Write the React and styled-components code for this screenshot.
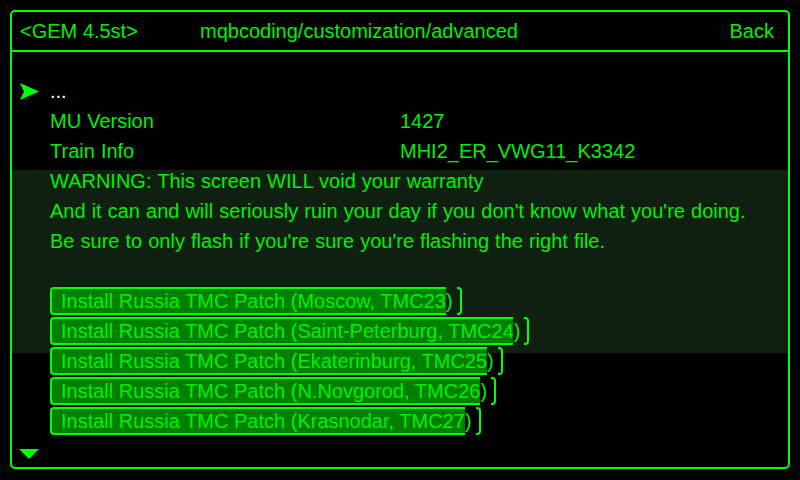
import React from "react";
import styled, { createGlobalStyle } from "styled-components";

const GREEN = "#00ff00";
const TEXT = "#00f000";

const Global = createGlobalStyle`
  html, body {
    margin: 0;
    padding: 0;
    background: #000;
  }
  body {
    width: 800px;
    height: 480px;
    overflow: hidden;
    font-family: "Liberation Sans", Arial, sans-serif;
  }
`;

const Screen = styled.div`
  width: 800px;
  height: 480px;
  padding: 10px 10px 11px 10px;
  box-sizing: border-box;
  background: #000;
`;

const Frame = styled.div`
  height: 100%;
  box-sizing: border-box;
  border: 2px solid ${GREEN};
  border-radius: 5px;
  display: flex;
  flex-direction: column;
`;

const Header = styled.div`
  height: 40px;
  box-sizing: border-box;
  border-bottom: 2px solid ${GREEN};
  display: flex;
  align-items: center;
  padding: 1px 14px 0 8px;
  color: ${TEXT};
  font-size: 20px;
`;

const Version = styled.div`
  width: 180px;
`;

const Path = styled.div`
  flex: 1;
`;

const Content = styled.div`
  flex: 1;
  display: grid;
  grid-template-columns: 38px 1fr;
  grid-auto-rows: 30px;
  padding-top: 24px;
  color: ${TEXT};
  font-size: 20px;
  word-spacing: 0.5px;
  line-height: 30px;
`;

const Band = styled.div`
  grid-column: 1 / -1;
  grid-row: 4 / 11;
  margin: 4px 0 23px;
  background: #102010;
`;

const Line = styled.div`
  grid-column: 2;
  grid-row: ${(p) => p.$row};
  display: flex;
  white-space: nowrap;
  color: ${(p) => (p.$white ? "#fff" : TEXT)};
  z-index: 1;
`;

const Label = styled.div`
  width: 350px;
`;

const Marker = styled.div`
  grid-column: 1;
  grid-row: ${(p) => p.$row};
  display: flex;
  align-items: ${(p) => (p.$bottom ? "flex-start" : "center")};
  padding: ${(p) => (p.$bottom ? "13px 0 0 7px" : "0 0 0 8px")};
`;

const Button = styled.div`
  grid-column: 2;
  grid-row: ${(p) => p.$row};
  justify-self: start;
  align-self: end;
  height: 28px;
  margin-bottom: 1px;
  display: flex;
  z-index: 1;
  white-space: nowrap;
  word-spacing: 0;
`;

const Fill = styled.div`
  height: 28px;
  box-sizing: border-box;
  border: 2px solid ${GREEN};
  border-right: none;
  border-radius: 4px 0 0 4px;
  background: #008000;
  padding-left: 9px;
  line-height: 24px;
`;

const Caption = styled.span`
  display: inline-block;
  margin-right: -7px;
`;

const Bracket = styled.div`
  width: 5px;
  height: 28px;
  box-sizing: border-box;
  margin-left: 11px;
  border: 2px solid ${GREEN};
  border-left: none;
  border-radius: 0 4px 4px 0;
`;

const patches = [
  "Moscow, TMC23",
  "Saint-Peterburg, TMC24",
  "Ekaterinburg, TMC25",
  "N.Novgorod, TMC26",
  "Krasnodar, TMC27",
];

export default function App() {
  return (
    <>
      <Global />
      <Screen>
        <Frame>
          <Header>
            <Version>&lt;GEM 4.5st&gt;</Version>
            <Path>mqbcoding/customization/advanced</Path>
            <div>Back</div>
          </Header>
          <Content>
            <Band />
            <Marker $row={1}>
              <svg width="19" height="17" viewBox="0 0 19 17">
                <polygon points="0,0 19,8.5 0,17 4,8.5" fill={GREEN} />
              </svg>
            </Marker>
            <Line $row={1} $white>...</Line>
            <Line $row={2}>
              <Label>MU Version</Label>
              <div>1427</div>
            </Line>
            <Line $row={3}>
              <Label>Train Info</Label>
              <div>MHI2_ER_VWG11_K3342</div>
            </Line>
            <Line $row={4}>WARNING: This screen WILL void your warranty</Line>
            <Line $row={5}>
              And it can and will seriously ruin your day if you don't know what you're doing.
            </Line>
            <Line $row={6}>
              Be sure to only flash if you're sure you're flashing the right file.
            </Line>
            {patches.map((p, i) => (
              <Button key={p} $row={8 + i}>
                <Fill>
                  <Caption>Install Russia TMC Patch ({p})</Caption>
                </Fill>
                <Bracket />
              </Button>
            ))}
            <Marker $row={13} $bottom>
              <svg width="20" height="10" viewBox="0 0 20 10">
                <polygon points="0,0 20,0 10,10" fill={GREEN} />
              </svg>
            </Marker>
          </Content>
        </Frame>
      </Screen>
    </>
  );
}
